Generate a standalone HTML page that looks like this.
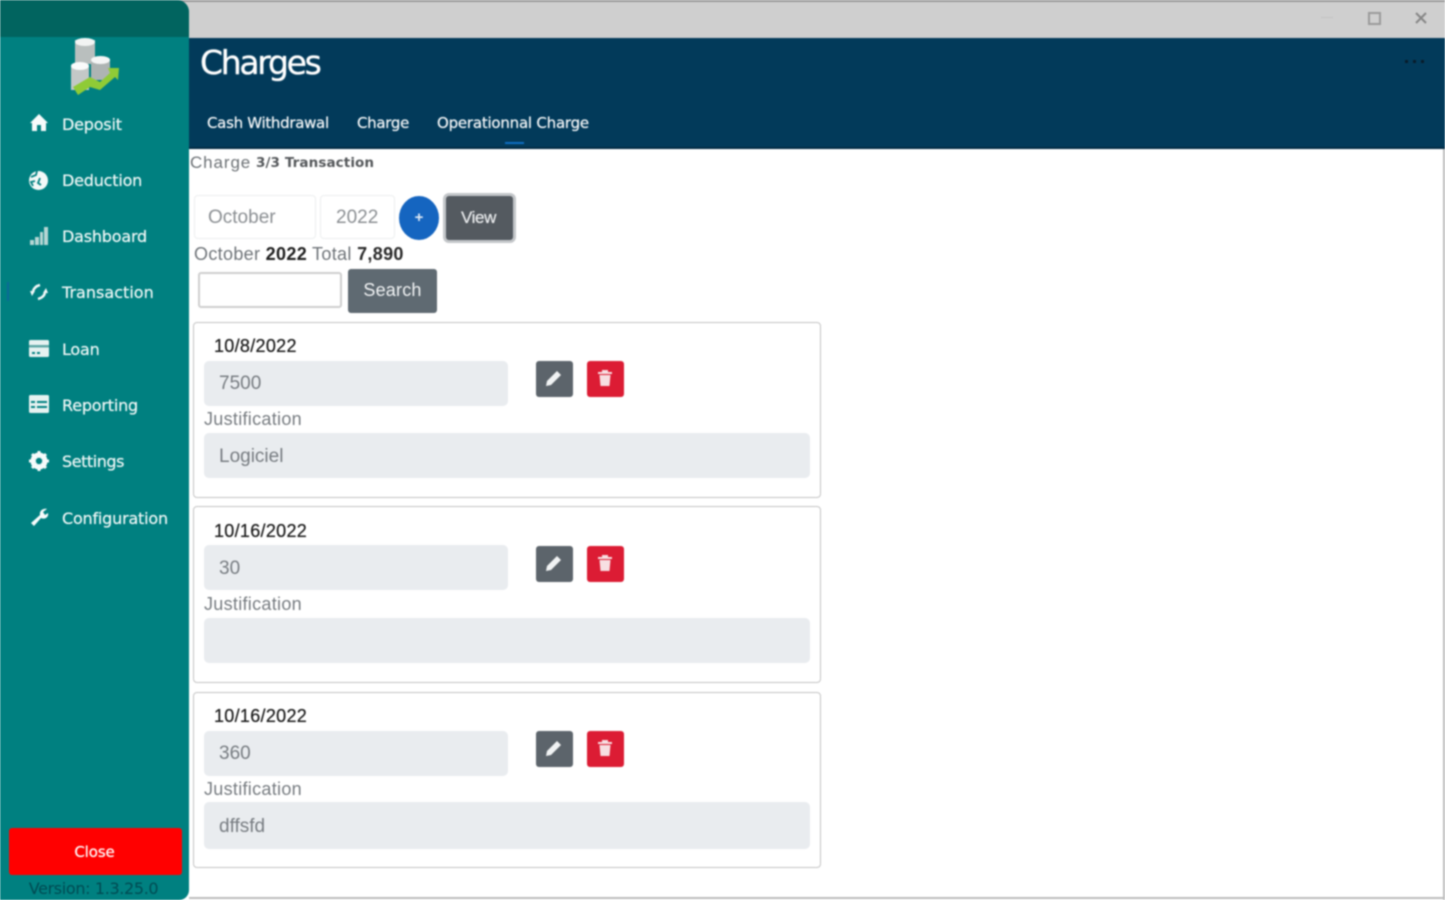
<!DOCTYPE html>
<html><head><meta charset="utf-8"><title>Charges</title>
<style>
html,body{margin:0;padding:0;width:1445px;height:900px;overflow:hidden;background:#fff;font-family:"Liberation Sans",sans-serif}
#w{position:absolute;left:0;top:0;width:1445px;height:900px;overflow:hidden;filter:blur(.75px)}
.a{position:absolute;white-space:nowrap}
.nav{color:#eef7f6;font-family:"DejaVu Sans",sans-serif;font-size:16px;letter-spacing:-.2px;left:62px;line-height:20px;text-shadow:0 0 .5px #fff}
.tab{color:#f2f5f7;font-family:"DejaVu Sans",sans-serif;font-size:15px;letter-spacing:-.3px;top:113px;line-height:20px;text-shadow:0 0 .6px #fff}
.card{position:absolute;left:193px;width:626px;border:1.5px solid #c4c4c4;border-radius:4px;background:#fff;box-sizing:content-box}
.in{position:absolute;background:#e9ecef;border-radius:5px}
.t{position:absolute;white-space:nowrap;color:#777c81;font-size:19px;line-height:24px}
.j{position:absolute;white-space:nowrap;color:#777c81;font-size:18px;line-height:24px;letter-spacing:.3px}
.d{position:absolute;white-space:nowrap;color:#1c1c1c;font-size:18px;line-height:22px;letter-spacing:.3px;text-shadow:0 0 .5px #222}
.btn{position:absolute;border-radius:3px;box-sizing:border-box}
svg{position:absolute;overflow:visible}
</style></head><body><div id="w">
<div class="a" style="left:0;top:0;width:1445px;height:38px;background:#cfcfcf;border-top:2px solid #999;box-sizing:border-box"></div>
<div class="a" style="left:1321px;top:17px;width:12px;height:1px;background:#c2c2c2"></div>
<div class="a" style="left:1368px;top:12px;width:9px;height:9px;border:2px solid #9a9a9a"></div>
<svg style="left:1415px;top:12px" width="12" height="12"><path d="M1 1L11 11M11 1L1 11" stroke="#858585" stroke-width="2"/></svg>
<div class="a" style="left:188px;top:38px;width:1257px;height:111px;background:#023a5a;border-bottom:2px solid #022c45;box-sizing:border-box"></div>
<div class="a" style="left:1405px;top:60px;width:3px;height:3px;background:#081c2a;box-shadow:8px 0 #081c2a,16px 0 #081c2a"></div>
<div class="a" style="left:200px;top:42px;color:#fff;font:400 33px/42px 'DejaVu Sans',sans-serif;letter-spacing:-2.3px;text-shadow:0 0 1px #fff">Charges</div>
<div class="a tab" style="left:207px">Cash Withdrawal</div>
<div class="a tab" style="left:357px">Charge</div>
<div class="a tab" style="left:437px;letter-spacing:-.22px">Operationnal Charge</div>
<div class="a" style="left:505px;top:142px;width:19px;height:2px;background:#0d6ec4"></div>

<!-- sidebar -->
<div class="a" style="left:0;top:0;width:189px;height:900px;background:#008080;border-radius:0 12px 10px 0"></div>
<div class="a" style="left:0;top:0;width:189px;height:37px;background:#01645f;border-radius:0 12px 0 0"></div>
<svg style="left:68px;top:36px" width="54" height="60" viewBox="0 0 54 60">
<rect x="7" y="4" width="20" height="24" fill="#b9bfbe"/><ellipse cx="17" cy="6" rx="10" ry="4" fill="#f2f4f3"/>
<rect x="3" y="29" width="18" height="25" fill="#c3c8c7"/><ellipse cx="12" cy="30" rx="9" ry="4" fill="#fafbfb"/>
<rect x="23" y="23" width="19" height="21" fill="#aeb4b3"/><ellipse cx="32.500" cy="24" rx="9.500" ry="4" fill="#f5f6f6"/>
<path d="M5 51L22 41L32 46L42 37L40 32L51 32L50 44L47 41L32 54L22 51L10 59Z" fill="#8fcb36"/></svg>
<svg style="left:29px;top:113px" width="20" height="20" viewBox="0 0 20 20"><path d="M10 1L19 10H17V18H12V12H8V18H3V10H1Z" fill="#f7fbfb"/></svg>
<div class="a nav" style="top:115px">Deposit</div>
<svg style="left:28px;top:170px" width="21" height="21" viewBox="0 0 21 21"><circle cx="10.500" cy="10.500" r="9.500" fill="#f3f9f8"/><path d="M9 1L8 5L3 7M12 8L10 13L13 15M7 11L3 12L5 16" stroke="#008080" stroke-width="1.800" fill="none"/></svg>
<div class="a nav" style="top:171px">Deduction</div>
<svg style="left:29px;top:226px" width="20" height="20" viewBox="0 0 20 20"><path d="M1 14h4v5H1zM6 11h4v8H6zM11 6h3v13h-3zM15 1h4v18h-4z" fill="#b6d6d3"/></svg>
<div class="a nav" style="top:227px">Dashboard</div>
<div class="a" style="left:7px;top:282px;width:2px;height:19px;background:#0b6a96"></div>
<svg style="left:29px;top:283px" width="20" height="18" viewBox="0 0 20 18"><path d="M4 8C5 5 7 3 11 2M16 10C15 13 13 15 9 16" stroke="#f2f8f8" stroke-width="2.600" fill="none"/><path d="M1 8L6 8L3 13ZM19 10L14 10L17 5Z" fill="#f2f8f8"/></svg>
<div class="a nav" style="top:283px;letter-spacing:.02px">Transaction</div>
<svg style="left:29px;top:340px" width="20" height="17" viewBox="0 0 20 17"><rect width="20" height="17" rx="1.500" fill="#e6f2f1"/><rect x="0" y="5" width="20" height="2.500" fill="#5fa8a6"/><path d="M3 12h3v2H3zM8 12h3v2H8z" fill="#008080"/></svg>
<div class="a nav" style="top:340px">Loan</div>
<svg style="left:29px;top:395px" width="20" height="18" viewBox="0 0 20 18"><rect width="20" height="18" rx="1.500" fill="#e6f2f1"/><path d="M2 6h4v2H2zM8 6h10v2H8zM2 11h4v2H2zM8 11h10v2H8z" fill="#008080"/></svg>
<div class="a nav" style="top:396px">Reporting</div>
<svg style="left:29px;top:451px" width="20" height="20" viewBox="0 0 20 20"><circle cx="10" cy="10" r="6.500" fill="none" stroke="#f7fbfb" stroke-width="4"/><path d="M10 0V20M0 10H20M3 3L17 17M17 3L3 17" stroke="#f7fbfb" stroke-width="3"/><circle cx="10" cy="10" r="3.200" fill="#008080"/></svg>
<div class="a nav" style="top:452px;letter-spacing:-.45px">Settings</div>
<svg style="left:30px;top:508px" width="19" height="19" viewBox="0 0 19 19"><path d="M1 15L10 7C9 3 13 0 17 1L13 4L15 7L18 5C19 9 15 12 11 10L4 18Z" fill="#f7fbfb"/></svg>
<div class="a nav" style="top:509px">Configuration</div>
<div class="a" style="left:9px;top:828px;width:173px;height:47px;background:#f00;border-radius:3px"></div>
<div class="a" style="left:8px;width:173px;top:842px;text-align:center;color:#fff;font:15px/20px 'DejaVu Sans',sans-serif;letter-spacing:-.1px;text-shadow:0 0 .6px #fff">Close</div>
<div class="a" style="left:-1px;width:189px;top:879px;text-align:center;color:#014a52;font:16px/20px 'DejaVu Sans',sans-serif;letter-spacing:-.35px">Version: 1.3.25.0</div>

<!-- header line -->
<div class="a" style="left:190px;top:153px;color:#6d7276;font-size:17px;line-height:20px;letter-spacing:.9px">Charge</div>
<div class="a" style="left:256px;top:153px;color:#55585b;font:bold 13.500px/20px 'DejaVu Sans',sans-serif;letter-spacing:.1px">3/3 Transaction</div>
<div class="a" style="left:194px;top:195px;width:122px;height:44px;border:1px solid #eceeef;border-radius:4px;box-sizing:border-box"></div>
<div class="t" style="left:208px;top:206px;color:#8b8f93;font-size:19px">October</div>
<div class="a" style="left:320px;top:195px;width:75px;height:44px;border:1px solid #eceeef;border-radius:4px;box-sizing:border-box"></div>
<div class="t" style="left:336px;top:206px;color:#8b8f93">2022</div>
<div class="a" style="left:399px;top:196px;width:40px;height:44px;background:#1565c0;border-radius:50%"></div>
<div class="a" style="left:399px;width:40px;top:208px;text-align:center;color:#dfe9f5;font:bold 15px/20px 'Liberation Sans'">+</div>
<div class="a" style="left:446px;top:196px;width:67px;height:44px;background:#545a60;border-radius:3px;box-shadow:0 0 0 3px #c3c6c9"></div>
<div class="a" style="left:445px;width:67px;top:208px;text-align:center;color:#e9ebed;font-size:17px;line-height:20px;letter-spacing:-.4px;text-shadow:0 0 .5px #fff">View</div>
<div class="a" style="left:194px;top:243px;font-size:18px;line-height:22px;color:#6f7479;letter-spacing:.33px">October <b style="color:#1e1e1e">2022</b> Total <b style="color:#2a2a2a">7,890</b></div>
<div class="a" style="left:198px;top:272px;width:144px;height:36px;border:2px solid #cfcfcf;border-radius:3px;box-sizing:border-box;background:#fff"></div>
<div class="a" style="left:348px;top:269px;width:89px;height:44px;background:#5f6a72;border-radius:3px"></div>
<div class="a" style="left:348px;width:89px;top:279px;text-align:center;color:#f1f3f4;font-size:18px;line-height:22px;letter-spacing:.2px">Search</div>

<!-- cards -->
<div class="card" style="top:322px;height:174px"></div>
<div class="d" style="left:214px;top:335px">10/8/2022</div>
<div class="in" style="left:204px;top:361px;width:304px;height:45px"></div>
<div class="t" style="left:219px;top:370px;top:372px">7500</div>
<div class="btn" style="left:536px;top:361px;width:37px;height:36px;background:#5c646b"></div>
<svg style="left:545px;top:369px" width="18" height="18" viewBox="0 0 18 18"><path d="M1 17L2 12L12 2L16 6L6 16Z" fill="#f1f3f4"/></svg>
<div class="btn" style="left:587px;top:361px;width:37px;height:36px;background:#dc1c34"></div>
<svg style="left:597px;top:369px" width="16" height="18" viewBox="0 0 16 18"><path d="M1 3H5V1H11V3H15V5H1ZM2.500 6H13.500L12.500 17H3.500Z" fill="#f7dfe2"/></svg>
<div class="j" style="left:204px;top:407px">Justification</div>
<div class="in" style="left:204px;top:433px;width:606px;height:45px"></div>
<div class="t" style="left:219px;top:445px">Logiciel</div>

<div class="card" style="top:506px;height:175px"></div>
<div class="d" style="left:214px;top:520px">10/16/2022</div>
<div class="in" style="left:204px;top:545px;width:304px;height:45px"></div>
<div class="t" style="left:219px;top:557px">30</div>
<div class="btn" style="left:536px;top:546px;width:37px;height:36px;background:#5c646b"></div>
<svg style="left:545px;top:554px" width="18" height="18" viewBox="0 0 18 18"><path d="M1 17L2 12L12 2L16 6L6 16Z" fill="#f1f3f4"/></svg>
<div class="btn" style="left:587px;top:546px;width:37px;height:36px;background:#dc1c34"></div>
<svg style="left:597px;top:554px" width="16" height="18" viewBox="0 0 16 18"><path d="M1 3H5V1H11V3H15V5H1ZM2.500 6H13.500L12.500 17H3.500Z" fill="#f7dfe2"/></svg>
<div class="j" style="left:204px;top:592px">Justification</div>
<div class="in" style="left:204px;top:618px;width:606px;height:45px"></div>

<div class="card" style="top:692px;height:174px"></div>
<div class="d" style="left:214px;top:705px">10/16/2022</div>
<div class="in" style="left:204px;top:731px;width:304px;height:45px"></div>
<div class="t" style="left:219px;top:742px">360</div>
<div class="btn" style="left:536px;top:731px;width:37px;height:36px;background:#5c646b"></div>
<svg style="left:545px;top:739px" width="18" height="18" viewBox="0 0 18 18"><path d="M1 17L2 12L12 2L16 6L6 16Z" fill="#f1f3f4"/></svg>
<div class="btn" style="left:587px;top:731px;width:37px;height:36px;background:#dc1c34"></div>
<svg style="left:597px;top:739px" width="16" height="18" viewBox="0 0 16 18"><path d="M1 3H5V1H11V3H15V5H1ZM2.500 6H13.500L12.500 17H3.500Z" fill="#f7dfe2"/></svg>
<div class="j" style="left:204px;top:777px">Justification</div>
<div class="in" style="left:204px;top:802px;width:606px;height:47px"></div>
<div class="t" style="left:219px;top:815px">dffsfd</div>
<div class="a" style="left:1443px;top:149px;width:2px;height:751px;background:#bdbdbd"></div>
<div class="a" style="left:189px;top:897px;width:1256px;height:2px;background:#bdbdbd"></div>
</div></body></html>
